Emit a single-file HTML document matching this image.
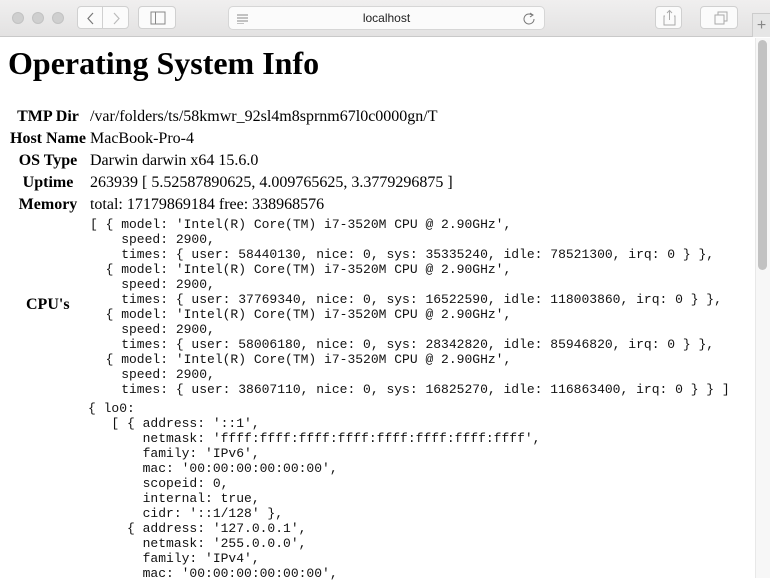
<!DOCTYPE html>
<html><head><meta charset="utf-8"><style>
*{box-sizing:border-box}
body{margin:0;width:770px;height:578px;overflow:hidden;background:#fff;font-family:"Liberation Serif",serif;position:relative}
.bar{position:absolute;left:0;top:0;width:770px;height:37px;background:linear-gradient(#f0efef,#e3e2e2);border-bottom:1px solid #c9c9c9}
.dot{position:absolute;top:12px;width:12px;height:12px;border-radius:50%;background:#cfcfcf;border:1px solid #c2c2c2}
.btn{position:absolute;top:6px;height:23px;background:#fbfbfb;border:1px solid #d0d0d0;border-radius:4px}
.url{position:absolute;left:228px;top:6px;width:317px;height:24px;background:#fbfbfb;border:1px solid #d6d6d6;border-radius:5px;font:12px "Liberation Sans",sans-serif;text-align:center;line-height:23px;color:#222}
.sb{position:absolute;left:755px;top:38px;width:15px;height:540px;background:#f7f7f7;border-left:1px solid #e8e8e8}
.thumb{position:absolute;left:758px;top:40px;width:9px;height:230px;border-radius:5px;background:#c2c2c2}
h1{position:absolute;left:8px;top:44px;margin:0;font-size:32px;line-height:38px;font-weight:bold}
table{position:absolute;left:7px;top:105px;border-spacing:2px;font-size:16px;line-height:18px}
th{padding:1px;text-align:center;white-space:nowrap;vertical-align:middle}
td{padding:1px;white-space:nowrap}
pre{margin:0;font-family:"Liberation Mono",monospace;font-size:13px;line-height:15px;position:absolute;color:#111}
</style></head><body>
<div class="bar">
<div class="dot" style="left:12px"></div><div class="dot" style="left:32px"></div><div class="dot" style="left:52px"></div>
<div class="btn" style="left:77px;width:26px;border-radius:4px 0 0 4px"><svg width="26" height="23"><path d="M15 6 L10 11.5 L15 17" stroke="#777" fill="none" stroke-width="1.2"/></svg></div>
<div class="btn" style="left:102px;width:27px;border-radius:0 4px 4px 0"><svg width="26" height="23"><path d="M11 6 L16 11.5 L11 17" stroke="#bbb" fill="none" stroke-width="1.2"/></svg></div>
<div class="btn" style="left:138px;width:38px"><svg width="38" height="23"><rect x="12" y="5" width="14" height="12" stroke="#888" fill="none"/><line x1="16.5" y1="5" x2="16.5" y2="17" stroke="#888"/></svg></div>
<div class="url"><svg width="14" height="10" style="position:absolute;left:7px;top:7px"><path d="M1 1h11M1 4h11M1 7h11M1 10h7" stroke="#888"/></svg>localhost<svg width="14" height="14" style="position:absolute;right:8px;top:5px"><path d="M10 3 A5 5 0 1 0 12 7" stroke="#777" fill="none"/><path d="M8 1 L11 3 L8 5" stroke="#777" fill="none"/></svg></div>
<div class="btn" style="left:655px;width:27px"><svg width="27" height="23"><path d="M9 9h-1v9h11v-9h-1M13.5 4v9M11 6l2.5-2.5 2.5 2.5" stroke="#aaa" fill="none"/></svg></div>
<div class="btn" style="left:700px;width:38px"><svg width="38" height="23"><rect x="14" y="8" width="9" height="9" stroke="#aaa" fill="none"/><path d="M17 8v-3h9v9h-3" stroke="#aaa" fill="none"/></svg></div>
<div style="position:absolute;left:752px;top:13px;width:18px;height:24px;border-left:1px solid #ccc;border-top:1px solid #ccc;background:#e6e6e6;color:#888;font:16px 'Liberation Sans',sans-serif;text-align:center;line-height:24px">+</div>
</div>
<div class="sb"></div><div class="thumb"></div>
<h1>Operating System Info</h1>
<table>
<tr><th>TMP Dir</th><td>/var/folders/ts/58kmwr_92sl4m8sprnm67l0c0000gn/T</td></tr>
<tr><th>Host Name</th><td>MacBook-Pro-4</td></tr>
<tr><th>OS Type</th><td>Darwin darwin x64 15.6.0</td></tr>
<tr><th>Uptime</th><td>263939 [ 5.52587890625, 4.009765625, 3.3779296875 ]</td></tr>
<tr><th>Memory</th><td>total: 17179869184 free: 338968576</td></tr>
</table>
<div style="position:absolute;left:26px;top:296px;font-weight:bold;font-size:16px">CPU's</div>
<pre style="left:90px;top:217px">[ { model: 'Intel(R) Core(TM) i7-3520M CPU @ 2.90GHz',
    speed: 2900,
    times: { user: 58440130, nice: 0, sys: 35335240, idle: 78521300, irq: 0 } },
  { model: 'Intel(R) Core(TM) i7-3520M CPU @ 2.90GHz',
    speed: 2900,
    times: { user: 37769340, nice: 0, sys: 16522590, idle: 118003860, irq: 0 } },
  { model: 'Intel(R) Core(TM) i7-3520M CPU @ 2.90GHz',
    speed: 2900,
    times: { user: 58006180, nice: 0, sys: 28342820, idle: 85946820, irq: 0 } },
  { model: 'Intel(R) Core(TM) i7-3520M CPU @ 2.90GHz',
    speed: 2900,
    times: { user: 38607110, nice: 0, sys: 16825270, idle: 116863400, irq: 0 } } ]</pre>
<pre style="left:88px;top:401px">{ lo0:
   [ { address: '::1',
       netmask: 'ffff:ffff:ffff:ffff:ffff:ffff:ffff:ffff',
       family: 'IPv6',
       mac: '00:00:00:00:00:00',
       scopeid: 0,
       internal: true,
       cidr: '::1/128' },
     { address: '127.0.0.1',
       netmask: '255.0.0.0',
       family: 'IPv4',
       mac: '00:00:00:00:00:00',</pre>
</body></html>
